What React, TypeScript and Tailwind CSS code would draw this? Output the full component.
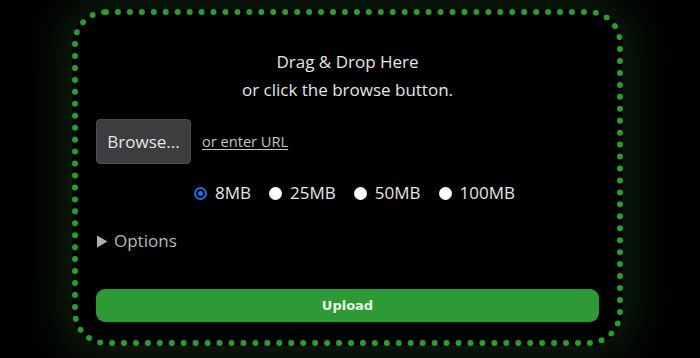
import { useState } from 'react';

const SIZES = ['8MB', '25MB', '50MB', '100MB'];

function Radio({ checked }: { checked: boolean }) {
  if (checked) {
    return (
      <span className="flex h-[13px] w-[13px] items-center justify-center rounded-full border-[2px] border-[#1a73e8] bg-black">
        <span className="h-[5px] w-[5px] rounded-full bg-[#1a73e8]" />
      </span>
    );
  }
  return <span className="h-[13px] w-[13px] rounded-full bg-white" />;
}

export default function App() {
  const [size, setSize] = useState('8MB');

  return (
    <div
      className="h-[358px] w-[700px] overflow-hidden bg-black pt-[9px] pl-[72px]"
      style={{ fontFamily: '"Open Sans", "Noto Sans", sans-serif' }}
    >
      <div className="h-[337px] w-[551px] rounded-[34px] border-[6px] border-dotted border-[#26a02a] bg-black px-[18px] pt-[33px] shadow-[0_0_45px_12px_rgba(40,90,40,0.35)]">
        <div className="text-center text-[17px] leading-[28px] text-[#e6e6e6]">
          <div>Drag &amp; Drop Here</div>
          <div>or click the browse button.</div>
        </div>

        <div className="mt-[15px] flex items-center gap-[11px]">
          <button className="h-[45px] w-[95px] rounded-[4px] border border-[#4a4c4e] bg-[#3b3d3f] text-[17px] text-[#e6e6e6]">
            Browse...
          </button>
          <a className="text-[14.6px] text-[#c4c4c4] underline underline-offset-2">or enter URL</a>
        </div>

        <div className="mt-[17px] flex h-[24px] items-center justify-center gap-[18px] pl-[14px] text-[17px] text-[#e6e6e6]">
          {SIZES.map((s) => (
            <label key={s} className="flex items-center gap-[8px]" onClick={() => setSize(s)}>
              <Radio checked={size === s} />
              <span>{s}</span>
            </label>
          ))}
        </div>

        <div className="mt-[24px] flex h-[24px] items-center gap-[6px] text-[17px] text-[#b8b8b8]">
          <svg width="12" height="13" viewBox="0 0 12 13">
            <path d="M1 0.5 L11.5 6.5 L1 12.5 Z" fill="#b0b0b0" />
          </svg>
          <span>Options</span>
        </div>

        <button
          className="mt-[36px] h-[33px] w-full rounded-[9px] bg-[#2e9a36] text-[13px] font-bold text-[#e8f5e4]"
          style={{ fontFamily: '"DejaVu Sans", Verdana, sans-serif' }}
        >
          Upload
        </button>
      </div>
    </div>
  );
}
